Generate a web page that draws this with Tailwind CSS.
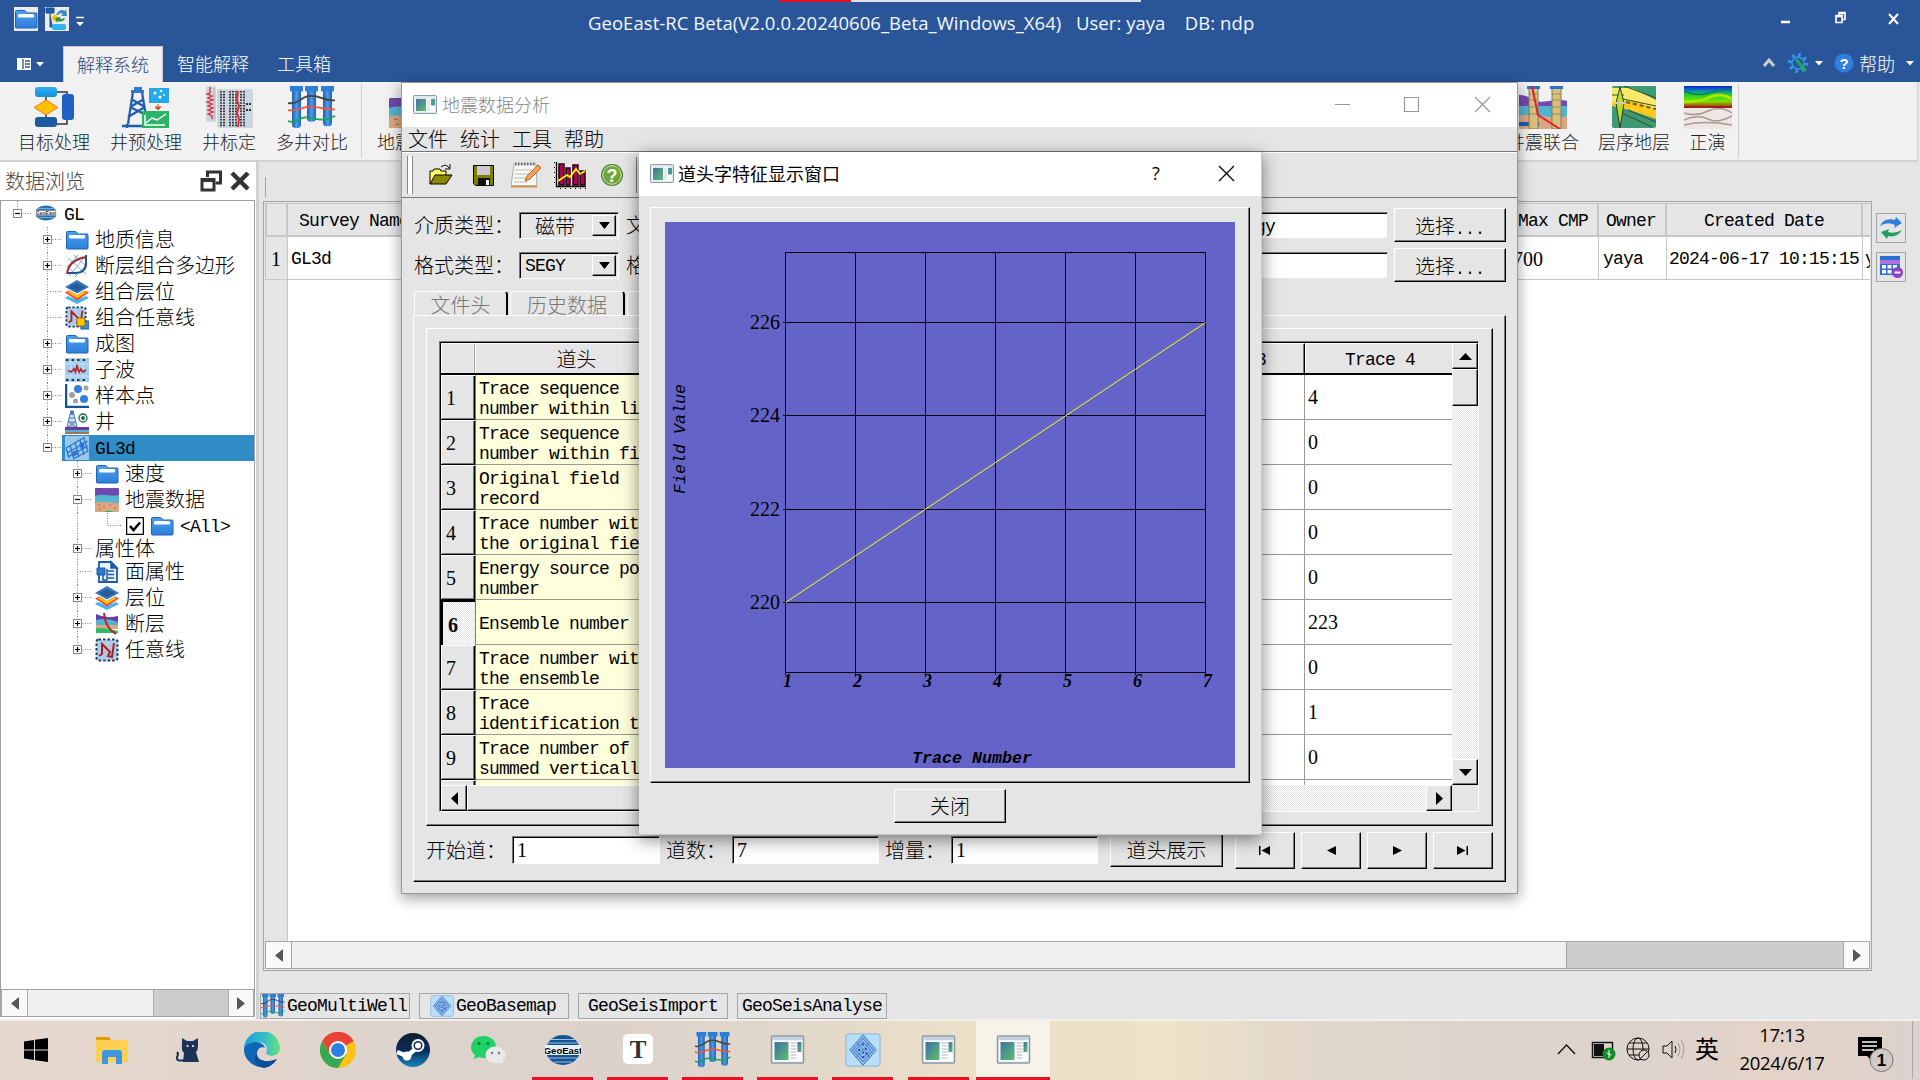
<!DOCTYPE html>
<html lang="zh-CN">
<head>
<meta charset="utf-8">
<title>GeoEast-RC Beta</title>
<script src="https://cdn.jsdelivr.net/npm/@tailwindcss/browser@4"></script>
</head>
<body class="w-[1920px] h-[1080px] overflow-hidden relative bg-[#e5e5e5] text-black font-['Liberation_Mono','Noto_Sans_CJK_SC',monospace] font-light text-[20px] leading-none whitespace-nowrap">

<svg class="absolute w-0 h-0">
  <defs>
    <linearGradient id="gFold" x1="0" y1="0" x2="0" y2="1"><stop offset="0" stop-color="#4aa0ec"/><stop offset="1" stop-color="#2f7fdb"/></linearGradient>
    <linearGradient id="gSky" x1="0" y1="0" x2="0" y2="1"><stop offset="0" stop-color="#2bb0f0"/><stop offset="1" stop-color="#1a8fd8"/></linearGradient>
    <linearGradient id="gPipe" x1="0" y1="0" x2="1" y2="0"><stop offset="0" stop-color="#1f5fae"/><stop offset=".5" stop-color="#4d9be8"/><stop offset="1" stop-color="#1f62b4"/></linearGradient>
    <linearGradient id="gWin" x1="0" y1="0" x2="1" y2="1"><stop offset="0" stop-color="#3f6fa8"/><stop offset="1" stop-color="#5fbf6a"/></linearGradient>
    <linearGradient id="gEdge" x1="0" y1="0" x2="1" y2="0"><stop offset="0" stop-color="#1b9de2"/><stop offset=".6" stop-color="#35c1c4"/><stop offset="1" stop-color="#6be07a"/></linearGradient>
    <linearGradient id="gSteam" x1="0" y1="0" x2="0" y2="1"><stop offset="0" stop-color="#111d2e"/><stop offset=".5" stop-color="#0b2a5b"/><stop offset="1" stop-color="#1387b8"/></linearGradient>
    <linearGradient id="gRain" x1="0" y1="0" x2="0" y2="1"><stop offset="0" stop-color="#1020d0"/><stop offset=".22" stop-color="#1088c0"/><stop offset=".4" stop-color="#20d020"/><stop offset=".7" stop-color="#7ee000"/><stop offset=".88" stop-color="#a06010"/><stop offset="1" stop-color="#a01010"/></linearGradient>
  </defs>
  <symbol id="folder" viewBox="0 0 24 24"><path d="M1.500 20V4.500q0-1 1-1h8l3 2.500h8.500q1 0 1 1V20q0 1-1 1h-19.500q-1 0-1-1z" fill="url(#gFold)" stroke="#1a63b8"/><rect x="4" y="7" width="16" height="3.500" rx="1.200" fill="#fff"/></symbol>
  <symbol id="geoeast" viewBox="0 0 24 16"><ellipse cx="12" cy="8" rx="11" ry="7.500" fill="#2b71ab"/><path d="M3 3.500h18M2 12.500h20" stroke="#9cc5df" stroke-width=".7"/><rect x="0" y="5.700" width="24" height="4.600" fill="#fff"/><text x="12" y="9.800" font-size="5" font-weight="bold" text-anchor="middle" font-family="Liberation Sans" fill="#333">GeoEast</text></symbol>
  <symbol id="fault2" viewBox="0 0 24 24"><path d="M3 4l18 16M9 1l13 12M2 12l10 10M20 3L4 22M22 10L10 23M13 1L2 13" stroke="#6d90b8" stroke-width=".8"/><path d="M2 20C3 10 10 5 21 3" fill="none" stroke="#a5282e" stroke-width="2"/><path d="M21 1v8c0 7-4 10-11 10H2" fill="none" stroke="#1e5594" stroke-width="2"/></symbol>
  <symbol id="layers" viewBox="0 0 24 24"><path d="M0 18l12 6 12-6-3-2-9 4-9-4z" fill="#46b4e8"/><path d="M0 12.500l12 8 12-8-4-2-8 4.500-8-4.500z" fill="#f2453c"/><path d="M2.500 12.300l9.500 6 9.500-6-2-1-7.500 4-7.500-4z" fill="#ffc800"/><path d="M0 7l12-7 12 7-12 6.500z" fill="#3377bd"/><path d="M4 7l8-4 8 4-8 4.500z" fill="#2a5c99"/></symbol>
  <symbol id="anyline" viewBox="0 0 24 24"><rect x="1.500" y="1.500" width="21" height="21" rx="2" fill="#a9d3f5" stroke="#23364f" stroke-width="2" stroke-dasharray="2.500 2"/><path d="M2.500 8h19M2.500 15h19M9 2v20M16 2v20" stroke="#c9b7b0" stroke-width="1"/><path d="M4 18l3-2V6l8 8-2 4 4 1 2-14" fill="none" stroke="#a8202a" stroke-width="2"/></symbol>
  <symbol id="anyline2" viewBox="0 0 24 24"><use href="#anyline" width="22" height="22"/><rect x="16" y="15" width="8" height="8" fill="#3d8ae0" stroke="#1f5fae"/><rect x="12" y="12" width="8" height="8" fill="#ffc400" stroke="#9a6a00"/></symbol>
  <symbol id="wavelet" viewBox="0 0 24 24"><rect width="24" height="24" fill="#9dcdf2"/><path d="M0 6h24M0 18h24M6 0v24M12 0v24M18 0v24" stroke="#cfe6f7"/><path d="M1 2h22M1 22h22" stroke="#333" stroke-width="2" stroke-dasharray="2.500 3"/><path d="M3 12.500l3 1.500 3-3 1.500 3L12 8l2 6 2-3 2 3 3-2" fill="none" stroke="#b32a30" stroke-width="1.800"/></symbol>
  <symbol id="samples" viewBox="0 0 24 24"><path d="M1 0v23h23" fill="none" stroke="#12539e" stroke-width="2.500"/><circle cx="13" cy="5" r="4" fill="#3280dd"/><circle cx="19" cy="15" r="4" fill="#3280dd"/><circle cx="7" cy="11" r="3" fill="#a2a2a2"/><circle cx="21" cy="4" r="2.500" fill="#a2a2a2"/><circle cx="10.500" cy="17" r="2.500" fill="#a2a2a2"/></symbol>
  <symbol id="wellrow" viewBox="0 0 24 24"><path d="M5 4h4l3 13H2z" fill="#cfe0ef" stroke="#4b7cab"/><path d="M5.500 1h3v3h-3zM4 8h6M3.500 12h7M3 17l7-5M11 17L4 12" stroke="#4b7cab" fill="#4b7cab"/><circle cx="18" cy="8" r="4" fill="#fff" stroke="#1b6e48" stroke-width="1.300"/><circle cx="18" cy="8" r="2" fill="#1b6e48"/><path d="M0 17h24v3H0z" fill="#6a3da5"/><path d="M0 20h24v2H0z" fill="#52b4cf"/><path d="M0 22h24v2H0z" fill="#a57254"/></symbol>
  <symbol id="survey3d" viewBox="0 0 24 24"><rect width="24" height="24" rx="1" fill="#9ac8ec"/><path d="M1 12L20 1M2 17L23 5M3 21L23 10M8 23l15-8M5 9l4 14M10 6l4 15M15 4l4 15M19 2l4 14M1 12l3 10" stroke="#2a74cf" stroke-width="1.300"/><path d="M6 17l5-3 2 4-5 3zM14 8l4-2 2 5-4 2z" fill="#2a74cf"/></symbol>
  <symbol id="seis" viewBox="0 0 24 24"><rect width="24" height="9" rx="1" fill="#6f47ad"/><path d="M0 8q5-2 11-1t13 0v9H0z" fill="#54b6cf"/><path d="M0 15q6-2 12-1t12 1v8q0 1-1 1H1q-1 0-1-1z" fill="#dca780"/><path d="M3 17h2M8 19h2M14 17h2M19 20h2M4 21h2" stroke="#a8714c"/><path d="M9 24q4-3 10 0z" fill="#2fb96a"/></symbol>
  <symbol id="doc" viewBox="0 0 24 24"><path d="M4 2h12l6 6v14H4z" fill="#e8f2fb" stroke="#1d5ba5" stroke-width="1.800"/><path d="M16 2v6h6zM13 11h6M13 14.500h6M13 18h6" stroke="#1d5ba5" stroke-width="1.600" fill="#1d5ba5"/><path d="M2 8h8v7H2z" fill="#2c7ac9" stroke="#1d5ba5"/><path d="M8 14v6h4V9" fill="none" stroke="#1d5ba5" stroke-width="1.500"/></symbol>
  <symbol id="faultrow" viewBox="0 0 24 24"><path d="M1 2q10 5 22 2v6H1z" fill="#6a3da5"/><path d="M1 8q10-3 22 2v5H1z" fill="#52b4cf"/><path d="M1 13h22v4H1z" fill="#dca780"/><path d="M1 16q12 0 22 3v2H1z" fill="#2fb96a"/><path d="M9 1q1 15 12 21" fill="none" stroke="#b3242c" stroke-width="2"/></symbol>
  <symbol id="wells" viewBox="0 0 48 48"><g fill="url(#gPipe)"><rect x="4" y="2" width="9" height="45" rx="4"/><rect x="19" y="2" width="9" height="38" rx="4"/><rect x="35" y="2" width="9" height="43" rx="4"/></g><g fill="#2c7fd6"><rect x="2" y="0" width="13" height="6"/><rect x="17" y="0" width="13" height="6"/><rect x="33" y="0" width="13" height="6"/></g><path d="M0 19c12 2 12-8 23-8s12 6 24 5" fill="none" stroke="#444" stroke-width="2"/><path d="M0 27c12 2 12-4 23-4s12 4 24 3" fill="none" stroke="#f2553a" stroke-width="2"/><path d="M0 39c8 4 12-5 18-4s20 6 29-2" fill="none" stroke="#20a060" stroke-width="2"/></symbol>
  <symbol id="win" viewBox="0 0 34 30" ><rect x="1" y="1" width="32" height="27" rx="1" fill="#eef2f6" stroke="#8a99a8" stroke-width="1.500"/><rect x="2" y="2" width="30" height="3" fill="#c5d0da"/><rect x="3" y="6" width="28" height="20" fill="#fff"/><rect x="4" y="7" width="14" height="18" fill="url(#gWin)"/><path d="M20 8h6M20 11h6M20 14h6M20 17h6M20 20h6M20 23h6" stroke="#ccd" stroke-width="1.500"/><rect x="27" y="7" width="4" height="10" fill="url(#gWin)"/></symbol>
  <symbol id="winsm" viewBox="0 0 24 20" preserveAspectRatio="none"><rect x=".5" y=".5" width="23" height="19" rx="1" fill="#dfe6ec" stroke="#8796a5"/><rect x="2" y="3" width="20" height="15" fill="#fff"/><rect x="3" y="4" width="10" height="13" fill="url(#gWin)"/><path d="M18 4h4v7h-4z" fill="#4b9a93"/><path d="M14 4h3v13h-3z" fill="#e4e8f2"/></symbol>
  <symbol id="basemap" viewBox="0 0 38 38" preserveAspectRatio="none"><rect x="1" y="1" width="36" height="36" rx="3" fill="#b9defa" stroke="#7fb0d8"/><path d="M19 2l14 17-14 17L5 19z" fill="#8cbcf0" stroke="#3c6fb8"/><path d="M19 6l11 13-11 13L8 19zM19 10l8 9-8 9-8-9z" fill="none" stroke="#3565b2" stroke-width=".9"/><path d="M12 10l14 17M26 10L12 27" stroke="#3565b2" stroke-width=".7"/><path d="M18 12h2v2h-2zM14 18h2v2h-2zM21 17h2v2h-2zM18 21h2v2h-2zM22 22h2v2h-2zM18 26h2v2h-2z" fill="#1f3f90"/></symbol>
</svg>

<div class="w-full h-full flex flex-col">
  <!-- title bar and ribbon tabs -->
  <header class="h-[82px] shrink-0 bg-[#2a5699] text-white flex flex-col font-['Open_Sans','Noto_Sans_CJK_SC',sans-serif]">
    <div class="h-[46px] flex items-start relative">
      <div class="absolute left-[779px] top-0 flex"><i class="w-[72px] h-[2px] bg-[#e81123]"></i><i class="w-[290px] h-[2px] bg-[#dfe4ec]"></i></div>
      <div class="flex gap-[7px] pl-[14px] pt-[7px] w-[588px]">
        <svg class="w-6 h-6 bg-[#ececec]"><use href="#folder"/></svg>
        <svg class="w-6 h-6 bg-[#ececec]" viewBox="0 0 24 24"><path d="M1 1h8v5H1zM5 6v14h3" fill="#1f5fae" stroke="#1c4c86"/><path d="M6 11l4-4 4 4-4 4z" fill="#ffc400"/><path d="M11 8q4-7 9-4l1-2 1 7h-6l2-2q-3-2-5 1z" fill="#3f86d0"/><path d="M20 11q-2 5-7 3l-1 2-2-5 6-1-1 2q3 1 3-1z" fill="#2c8c58"/><rect x="7" y="17" width="14" height="6" rx="2" fill="#2fb4ea"/></svg>
        <svg class="w-[10px] h-[12px] mt-[9px] -ml-px" viewBox="0 0 10 12"><path d="M1 1.500h8" stroke="#fff"  stroke-width="1.500"/><path d="M1 6h8L5 10z" fill="#fff"/></svg>
      </div>
      <div class="pt-[11px] text-[18.500px] leading-6 tracking-[0.050px] whitespace-pre font-normal text-[#f4f6fa]">GeoEast-RC Beta(V2.0.0.20240606_Beta_Windows_X64)   User: yaya    DB: ndp</div>
      <svg class="ml-auto w-[140px] h-[38px]" viewBox="0 0 140 38" fill="none" stroke="#fff"><path d="M1 22h9" stroke-width="2.500"/><path d="M56 15.500h6v7h-6zM56 16.500h6M59 15v-2.500h6v7h-3M59 13.500h6" stroke-width="1.700"/><path d="M109 14l9 10M118 14l-9 10" stroke-width="2"/></svg>
    </div>
    <div class="h-9 flex text-[18px] leading-9">
      <div class="w-[63px] pl-[17px] pt-3 flex gap-[5px]">
        <svg class="w-[14px] h-[12px]"><path d="M0 0h14v12H0z" fill="#fff"/><path d="M6 1v10M8 3h5M8 6h5M8 9h5" stroke="#2a5699" stroke-width="1.300"/></svg>
        <svg class="w-2 h-[12px]"><path d="M0 4h8L4 8.500z" fill="#fff"/></svg>
      </div>
      <div class="w-[100px] bg-[#f1f1f1] border-t border-x border-[#ccc] text-[#2b4a80] text-center">解释系统</div>
      <div class="w-[100px] text-center">智能解释</div>
      <div class="w-[82px] text-center">工具箱</div>
      <div class="ml-auto flex pr-[5px]">
        <svg class="w-[97px] h-9 mr-[2px]" viewBox="0 0 97 36"><path d="M3 20l5-6 5 6" fill="none" stroke="#c8ccd2" stroke-width="3"/><circle cx="37" cy="17" r="8" fill="none" stroke="#3696e8" stroke-width="4" stroke-dasharray="2.500 3.780"/><circle cx="37" cy="17" r="6" fill="#2a5699" stroke="#3696e8" stroke-width="1.500"/><path d="M35 13l3 4 7 8" stroke="#20a85e" stroke-width="3"/><path d="M54 15h8l-4 4.500z" fill="#fff"/><circle cx="83" cy="17" r="9.500" fill="#2f80de"/><text x="83" y="22.500" text-anchor="middle" font-size="15" font-weight="bold" fill="#fff" font-family="Liberation Sans">?</text></svg>
        <span class="w-[46px] -ml-px mr-px">帮助</span>
        <svg class="w-[9px] h-9"><path d="M0 15h8l-4 4.500z" fill="#fff"/></svg>
      </div>
    </div>
  </header>

  <!-- ribbon -->
  <section class="h-[80px] shrink-0 bg-[#f1f1f1] border-b-2 border-[#d2d2d2] mr-[2px] border-r flex text-[18px] text-[#222] font-['Noto_Sans_CJK_SC',sans-serif] leading-6">
    <div class="w-[108px] flex flex-col items-center pt-[5px]">
      <svg class="w-10 h-[41px] mb-[1px]" viewBox="0 0 40 41"><path d="M12 10v20M20 5h13v32H20" fill="none" stroke="#333" stroke-width="1.500"/><rect x="1" y="0" width="22" height="10" rx="3" fill="url(#gSky)"/><rect x="28" y="7" width="12" height="26" rx="3" fill="#2060c4"/><path d="M12 13l12 7.500-12 7.500L0 20.500z" fill="#ffc000" stroke="#e87e1c"/><rect x="1" y="30" width="22" height="10" rx="3" fill="#1d5ba0"/></svg>目标处理</div>
    <div class="w-[76px] flex flex-col items-center pt-[5px]">
      <svg class="w-12 h-[41px] mb-[1px]" viewBox="0 0 48 41"><path d="M11 5L6 37M20 5l5 31M9 12l14 8M22 12L8 20M8 20l16 8M23 20L6 30M0 39h28M5 37v4" fill="none" stroke="#235fae" stroke-width="2.300"/><path d="M12 0h8v3H12zM9 3h13v3H9z" fill="#3477cb"/><rect x="27" y="1" width="20" height="15" fill="#27a8ea"/><g fill="#fff"><circle cx="33" cy="6" r="1.500"/><circle cx="39" cy="4" r="1.300"/><circle cx="38" cy="10" r="1.600"/><circle cx="42" cy="8" r="1"/></g><path d="M36 17v4M33 20h6l-3 3z" fill="#e84a2c" stroke="#e84a2c"/><rect x="20" y="24" width="27" height="17" fill="#2bb468"/><path d="M23 28v10h20M24 36l6-5 5 2 9-6" fill="none" stroke="#fff" stroke-width="1.500"/></svg>井预处理</div>
    <div class="w-[90px] flex flex-col items-center pt-[4px]">
      <svg class="w-12 h-[42px] mb-[1px]" viewBox="0 0 48 42"><rect x="1" y="0" width="10" height="36" rx="2" fill="#cdd5dd"/><rect x="12" y="3" width="36" height="39" rx="2" fill="#cbd6e1"/><path d="M5 1v6l-3 1 5 2-4 2 5 2-6 2 5 2-4 2 5 2-5 2 5 2-5 2 4 2v3" fill="none" stroke="#e02836" stroke-width="1.300"/><path d="M9 2v32" stroke="#8d98a6" stroke-dasharray="1 1"/><g fill="none" stroke="#3a3a3a" stroke-width="2" stroke-dasharray="1.600 1.200"><path d="M16 5v36M19 5v36M25 5v36M28 5v36M31 5v36M36 5v36M39 5v36"/></g><path d="M33 5l-1 9 2 6-2 7 2 6-1 8" fill="none" stroke="#e02836" stroke-width="2"/><path d="M41 18h6M41 24h6" stroke="#333" stroke-width="2" stroke-dasharray="2 1"/></svg>井标定</div>
    <div class="w-[76px] flex flex-col items-center pt-[4px]"><svg class="w-12 h-[43px]" viewBox="0 0 48 48" preserveAspectRatio="none"><use href="#wells"/></svg>多井对比</div>
    <div class="w-[12px] border-r border-[#cfcfcf] mt-[2px] h-[74px]"></div>
    <div class="pl-[15px] pt-[4px] flex flex-col"><svg class="w-10 h-[30px] ml-[12px] mt-[12px] mb-[1px]" preserveAspectRatio="none" viewBox="0 0 24 24"><use href="#seis"/></svg>地震</div>
    <div class="ml-auto w-[90px] flex flex-col items-center pt-[4px]">
      <svg class="w-12 h-[43px]" viewBox="0 0 48 43"><path d="M0 9q8 0 12 4t18 2 18 0v12H0z" fill="#7448b4"/><path d="M0 20h48v14H0z" fill="#52b4cf"/><path d="M0 30q10-3 24 0t24 0v13H0z" fill="#dca780"/><path d="M0 38h20" stroke="#1c5bb8" stroke-width="4"/><g fill="#d8c078" stroke="#8a7c50"><rect x="10" y="2" width="9" height="41"/><rect x="33" y="2" width="9" height="41"/></g><path d="M10 8h9M10 14h9M10 21h9M10 28h9M33 8h9M33 14h9M33 21h9M33 28h9" stroke="#777" stroke-dasharray="2 1"/><path d="M8 0h13v3H8zM31 0h13v3H31z" fill="#2a74cf"/><path d="M13 0l6 29 22 14" fill="none" stroke="#e0202c" stroke-width="2"/></svg>井震联合</div>
    <div class="w-[92px] flex flex-col items-center pt-[4px]">
      <svg class="w-11 h-[43px]" viewBox="0 0 44 43"><rect width="44" height="42" rx="2" fill="#3d9a72"/><path d="M0 3l20 6 24 10v14L18 24 0 20z" fill="#ffc81e"/><path d="M0 2h20l24 12v9L20 14 0 17z" fill="#f6e86a"/><path d="M22 0h22v14z" fill="#3d9a72"/><path d="M6 12l38 8M12 0l32 12M16 24l28 12M10 27l30 14M0 9h12" stroke="#374a2c" fill="none"/><path d="M14 16l30 7" stroke="#6a5c10" stroke-width="2" stroke-dasharray="4 3"/><path d="M8 1l4 16-4 25L4 17z" fill="#b8e020" stroke="#333"/><path d="M3 17h10" stroke="#ccc" stroke-width="2"/></svg>层序地层</div>
    <div class="w-[55px] flex flex-col items-center pt-[4px]">
      <svg class="w-12 h-[43px]" viewBox="0 0 48 43"><rect width="48" height="22" fill="url(#gRain)"/><path d="M0 5q12 6 24 2t24-3" fill="none" stroke="#0a7a70" stroke-width="1.500"/><path d="M0 16q16 0 26-5t22 2" fill="none" stroke="#a8e800" stroke-width="3"/><rect y="21" width="48" height="22" fill="#eee6e2"/><path d="M0 27q12 4 24-2t24 2M0 34q14-6 24-1t24-3M0 39q20-5 48 0" fill="none" stroke="#a89894" stroke-width="1.500"/><path d="M0 21h48" stroke="#9a2020" stroke-width="2"/></svg>正演</div>
    <div class="w-[4px] border-r border-[#cfcfcf] mt-[2px] h-[74px] mr-[178px]"></div>
  </section>

  <!-- body -->
  <div class="flex h-[857px] shrink-0">
    <aside class="w-[256px] bg-white flex flex-col font-['Noto_Sans_CJK_SC',sans-serif]">
      <div class="h-[38px] flex items-center pl-[5px] pb-px text-[#444]">数据浏览
        <svg class="ml-auto w-[22px] h-[22px]" viewBox="0 0 22 22"><path d="M7.500 7V2h13v11h-5" fill="none" stroke="#333" stroke-width="3"/><path d="M2 9.500h12v10.500H2zM2 10.500h12" fill="#fff" stroke="#333" stroke-width="3"/></svg>
        <svg class="ml-[8px] mr-[6px] w-[20px] h-[20px]" viewBox="0 0 20 20"><path d="M2 2l16 16M18 2L2 18" stroke="#333" stroke-width="4.500"/></svg>
      </div>
      <div class="w-[255px] h-[817px] border border-[#a0a0a0] flex flex-col">
        <div id="tree" class="flex-1 overflow-hidden"></div>
        <div class="h-[27px] flex border-t border-[#a0a0a0] bg-[#cdcdcd]">
          <div class="w-[27px] bg-[#f8f8f8] border-x border-[#aaa] flex items-center justify-center"><svg class="w-2 h-[13px]"><path d="M8 0v13L0 6.500z" fill="#555"/></svg></div>
          <div class="w-[126px] bg-[#f0f0f0] border-r border-[#aaa]"></div>
          <div class="ml-auto w-[26px] bg-[#f8f8f8] border-x border-[#aaa] flex items-center justify-center"><svg class="w-2 h-[13px]"><path d="M0 0v13L8 6.500z" fill="#555"/></svg></div>
        </div>
      </div>
    </aside>
    <div class="w-[3px] bg-[#d2d2d2] h-[857px]"></div>
    <main class="flex-1 flex flex-col pl-[1px]">
      <div class="h-[39px] pt-[15px] pl-[5px]"><div class="h-5 border-l border-[#a0a0a0] w-2"></div></div>
      <div class="flex">
        <div class="ml-[3px] w-[1609px] h-[770px] border border-[#a6a6a6] p-px flex flex-col text-[18px] tracking-[-0.8px]">
          <div class="h-[34px] flex border-t border-[#c6c6c6] leading-[34px] border-b-2 border-b-[#c6c6c6]">
            <div class="w-[23px] border-x-2 border-[#c6c6c6]"></div>
            <div class="flex-1 pl-[11px]">Survey Name</div>
            <div class="w-[89px] border-r-2 border-[#c6c6c6] pl-[8px]">Max CMP</div>
            <div class="w-[68px] border-r-2 border-[#c6c6c6] pl-[7px]">Owner</div>
            <div class="w-[196px] border-r-2 border-[#c6c6c6] text-center">Created Date</div>
            <div class="w-[7px]"></div>
          </div>
          <div class="h-[43px] flex border-b border-[#c6c6c6] leading-[44px] bg-white">
            <div class="w-[23px] border-x border-[#c6c6c6] bg-[#e5e5e5] pl-[5px] font-['Liberation_Serif',serif] text-[20px] tracking-normal">1</div>
            <div class="flex-1 pl-[3px]">GL3d</div>
            <div class="w-[89px] border-r border-[#c6c6c6] pl-[3px] font-['Liberation_Serif',serif] text-[20px] tracking-normal">700</div>
            <div class="w-[68px] border-r border-[#c6c6c6] pl-[4px]">yaya</div>
            <div class="w-[196px] border-r border-[#c6c6c6] pl-[2px]">2024-06-17 10:15:15</div>
            <div class="w-[7px] overflow-hidden pl-[2px]">y</div>
          </div>
          <div class="flex-1 flex bg-white"><div class="w-[23px] bg-[#e5e5e5] border-r border-[#c6c6c6]"></div></div>
          <div class="h-[28px] flex border border-[#a6a6a6] bg-[#cdcdcd]">
            <div class="w-[26px] bg-[#f8f8f8] border-r border-[#a6a6a6] flex items-center justify-center"><svg class="w-2 h-[13px]"><path d="M8 0v13L0 6.500z" fill="#555"/></svg></div>
            <div class="w-[1275px] bg-[#f0f0f0] border-r border-[#a6a6a6]"></div>
            <div class="ml-auto w-[26px] bg-[#f8f8f8] border-l border-[#a6a6a6] flex items-center justify-center"><svg class="w-2 h-[13px]"><path d="M0 0v13L8 6.500z" fill="#555"/></svg></div>
          </div>
        </div>
        <div class="pl-[4px] pt-[12px] flex flex-col gap-[9px]">
          <div class="w-[30px] h-[30px] border border-[#a6a6a6] p-[2px]"><svg class="w-6 h-6" viewBox="0 0 24 24"><path d="M1 10Q5 1 16 4l1-3 6 6-8 5 1-3Q8 5 1 10z" fill="#2c80dc"/><path d="M23 14q-5 8-14 6l-1 3-6-7 8-3-1 3q7 2 14-2z" fill="#22a060"/></svg></div>
          <div class="w-[30px] h-[30px] border border-[#a6a6a6] p-[2px]"><svg class="w-6 h-6" viewBox="0 0 24 24"><path d="M1 1h20v19H1z" fill="#2b6fd0"/><path d="M1 5h20v4H1z" fill="#b070e0"/><path d="M3 10h4v3.500H3zM8.500 10h4v3.500h-4zM14 10h4v3.500h-4zM3 15h4v3.500H3zM8.500 15h4v3.500h-4z" fill="#fff"/><circle cx="18.500" cy="17.500" r="5.500" fill="#9340c4"/><path d="M15.500 17.500h6" stroke="#fff" stroke-width="2"/></svg></div>
        </div>
      </div>
      <div class="flex mt-[22px] gap-[9px] text-[18px] tracking-[-0.8px] leading-[26px]">
        <div class="w-[150px] h-[26px] border border-[#a6a6a6] flex items-center"><svg class="w-6 h-6 mr-[2px]"><use href="#wells"/></svg>GeoMultiWell</div>
        <div class="w-[150px] h-[26px] border border-[#a6a6a6] flex items-center pl-[10px]"><svg class="w-6 h-[22px] mr-[2px]"><use href="#basemap"/></svg>GeoBasemap</div>
        <div class="w-[150px] h-[26px] border border-[#a6a6a6] flex items-center justify-center">GeoSeisImport</div>
        <div class="w-[150px] h-[26px] border border-[#a6a6a6] flex items-center justify-center">GeoSeisAnalyse</div>
      </div>
    </main>
  </div>

  <!-- taskbar -->
  <footer class="h-[61px] shrink-0 border-t-2 border-[#f2efec] flex font-['Open_Sans','Noto_Sans_CJK_SC',sans-serif] font-normal bg-[linear-gradient(90deg,#e6d8ce_0%,#e2d5cb_12%,#dcd3cd_22%,#ddd2cb_32%,#e2d8ca_42%,#ebe0c8_50%,#ece3c9_61%,#e2d7ca_68%,#dcd3cd_78%,#dfd3cc_88%,#e4d3c7_92%,#dcd2cc_100%)]">
    <div id="tasks" class="flex"></div>
    <div class="ml-auto flex">
      <svg class="w-[139px] h-[58px]" viewBox="0 0 139 58" fill="none" stroke="#111"><path d="M2 33l8.500-9 8.500 9" stroke-width="1.300"/><path d="M36.500 21.500h20v15h-20z" stroke-width="1.500"/><path d="M38 23h10v12H38z" fill="#111" stroke="none"/><circle cx="53" cy="33" r="6.500" fill="#128a28" stroke="none"/><path d="M53 29v8M50.500 32l5 2" stroke="#fff"/><circle cx="82" cy="28" r="11"/><ellipse cx="82" cy="28" rx="5" ry="11"/><path d="M71 28h22M73 22h18M73 34h11"/><circle cx="88" cy="34" r="5" fill="#ddd3cd"/><path d="M85 37l6-6"/><path d="M107 25h4l5-5v17l-5-5h-4z"/><path d="M119 25q2 3 0 7" /><path d="M122 22q4 6 0 13M125 19q6 9 0 19" stroke="#999"/></svg>
      <div class="text-[24px] leading-[56px] pr-[15px]">英</div>
      <div class="text-[18.500px] leading-7 text-center w-[96px] pt-0 tracking-[-0.300px]">17:13<br>2024/6/17</div>
      <svg class="w-[90px] h-[58px]" viewBox="0 0 90 58"><path d="M28 16h24v19H43v6l-6-6h-9z" fill="#000"/><path d="M32 21h15M32 25h15M32 29h12" stroke="#fff" stroke-width="1.300"/><circle cx="51.500" cy="39" r="11.500" fill="#cfcac6" stroke="#777"/><text x="51.500" y="45" font-size="17" font-weight="bold" text-anchor="middle" font-family="Liberation Sans">1</text><path d="M82.500 0v58" stroke="#aaa"/></svg>
    </div>
  </footer>
</div>

<!-- analysis window -->
<section class="absolute left-[401px] top-[82px] w-[1117px] h-[812px] bg-[#e5e5e5] border border-[#999] shadow-[0_4px_14px_rgba(0,0,0,0.4)] flex flex-col font-['Noto_Sans_CJK_SC',sans-serif]">
  <div class="h-[44px] shrink-0 bg-white flex items-center pl-[11px] text-[18px] text-[#888]">
    <svg class="w-6 h-[19px] mr-[5px] mb-[2px]"><use href="#winsm"/></svg><span class="pb-[2px]">地震数据分析</span>
    <svg class="ml-auto w-[182px] h-[44px]" viewBox="0 0 182 44" fill="none" stroke="#999"><path d="M0 21.500h15M69.500 14.500h14v14h-14zM140 14l15 15M155 14l-15 15" stroke-width="1.200"/></svg>
  </div>
  <div class="h-[25px] shrink-0 flex gap-3 pl-[6px] leading-[23px] border-b border-[#777]"><span>文件</span><span>统计</span><span>工具</span><span>帮助</span></div>
  <div class="h-[46px] shrink-0 flex items-center pl-[5px] border-t border-t-white border-b border-b-[#777]">
    <div class="w-[6px] h-[38px] border-x border-[#888] bg-white mr-[15px]"></div>
    <svg class="w-[25px] h-[24px] mr-[20px]" viewBox="0 0 25 24"><path d="M2 21V8h3l1-2h6l1 2h5v4" fill="#ffff66" stroke="#000"/><path d="M2 21l5-9h17l-6 9z" fill="#8a8a00" stroke="#000"/><path d="M13 4q5-4 8 1M22 1v5h-5" fill="none" stroke="#000"/></svg>
    <svg class="w-[21px] h-[21px] mr-[17px]" viewBox="0 0 21 21"><path d="M.5.500h20v20h-18l-2-2z" fill="#808000" stroke="#000"/><path d="M4 1h13v9H4z" fill="#d0c8d4"/><path d="M5 13h12v8H5z" fill="#111"/><path d="M13 15h3v5h-3z" fill="#fff"/></svg>
    <svg class="w-[31px] h-[26px] mr-[12px]" viewBox="0 0 31 26"><path d="M3 2h22l1 22H0z" fill="#f8f8f6" stroke="#aaa"/><path d="M0 24.500h26" stroke="#d08a44" stroke-width="1.800"/><path d="M4 2h20" stroke="#777" stroke-width="3" stroke-dasharray="1.500 1.500"/><path d="M4 8h17M4 12h15M3 16h12M3 20h14" stroke="#bbb"/><path d="M14 19l2-5L27 3l3 3-11 11z" fill="#f6a05a" stroke="#b8621c"/></svg>
    <svg class="w-[32px] h-[27px] mr-[14px]" viewBox="0 0 32 27"><path d="M2.500 0v24.500H32" fill="none" stroke="#000" stroke-width="1.300"/><path d="M.5 0v23M6 26.500h26" stroke="#000" stroke-dasharray="1 4"/><g fill="#b00050" stroke="#200010" stroke-width="1.500"><rect x="5" y="2" width="5" height="21"/><rect x="12" y="6" width="4" height="17"/><rect x="19" y="3" width="5" height="20"/><rect x="26" y="9" width="5" height="14"/></g><path d="M4 19l9-6 3 2 6-8 4 5 5-3" fill="none" stroke="#ff0" stroke-width="1.700"/></svg>
    <svg class="w-[24px] h-[24px]" viewBox="0 0 24 24"><circle cx="12" cy="12" r="11" fill="#4d7f24"/><circle cx="12" cy="12" r="9.300" fill="#6ea53b" stroke="#dfeecb"/><text x="12" y="18.500" font-size="18" font-weight="bold" text-anchor="middle" fill="#fff" font-family="Liberation Sans">?</text></svg>
    <div class="ml-[12px] h-9 border-l border-[#777]"></div>
  </div>
  <div class="flex flex-col gap-[6px] pl-[12px] pr-[11px] pt-[10px]">
    <div class="h-[34px] flex items-center">
      <span class="w-[105px]">介质类型：</span>
      <div class="w-[100px] h-[27px] border border-t-[#777] border-l-[#777] border-r-white border-b-white shadow-[inset_1px_1px_0_#000] pl-[15px] pt-[2px] pr-[2px] flex leading-[22px]">磁带<div class="ml-auto w-[24px] h-[21px] border border-t-white border-l-white border-r-black border-b-black shadow-[inset_-1px_-1px_0_#777] flex items-center justify-center"><svg class="w-[11px] h-[7px]"><path d="M0 0h11L5.500 7z"/></svg></div></div>
      <span class="pl-[7px]">文件</span>
      <div class="ml-auto w-[260px] h-[27px] bg-white border border-t-[#777] border-l-[#777] border-r-[#e5e5e5] border-b-[#e5e5e5] shadow-[inset_1px_1px_0_#000] flex items-center justify-end pr-[112px] pt-[3px] font-['Liberation_Mono'] text-[18px] tracking-[-0.8px]">gl.segy</div>
      <div class="ml-[6px] w-[112px] h-[34px] border border-t-white border-l-white border-r-black border-b-black shadow-[inset_-1px_-1px_0_#777] pl-[20px] leading-[33px]">选择<span class="font-['Liberation_Mono'] text-[16.670px]">...</span></div>
    </div>
    <div class="h-[34px] flex items-center">
      <span class="w-[105px]">格式类型：</span>
      <div class="w-[100px] h-[27px] border border-t-[#777] border-l-[#777] border-r-white border-b-white shadow-[inset_1px_1px_0_#000] pl-[5px] pt-[2px] pr-[2px] flex leading-[22px] font-['Liberation_Mono'] text-[18px] tracking-[-0.8px]">SEGY<div class="ml-auto w-[24px] h-[21px] border border-t-white border-l-white border-r-black border-b-black shadow-[inset_-1px_-1px_0_#777] flex items-center justify-center"><svg class="w-[11px] h-[7px]"><path d="M0 0h11L5.500 7z"/></svg></div></div>
      <span class="pl-[7px]">格式</span>
      <div class="ml-auto w-[260px] h-[27px] bg-white border border-t-[#777] border-l-[#777] border-r-[#e5e5e5] border-b-[#e5e5e5] shadow-[inset_1px_1px_0_#000]"></div>
      <div class="ml-[6px] w-[112px] h-[34px] border border-t-white border-l-white border-r-black border-b-black shadow-[inset_-1px_-1px_0_#777] pl-[20px] leading-[33px]">选择<span class="font-['Liberation_Mono'] text-[16.670px]">...</span></div>
    </div>
  </div>
  <div class="h-[24px] shrink-0 mt-[9px] pl-[12px] flex gap-[2px] text-[#777] leading-[25px]">
    <div class="w-[94px] text-center rounded-t border-t border-l border-white border-r-2 border-r-black">文件头</div>
    <div class="w-[115px] text-center rounded-t border-t border-l border-white border-r-2 border-r-black">历史数据</div>
    <div class="w-[94px] text-center rounded-t border-t border-l border-white border-r-2 border-r-black">道头</div>
  </div>
  <div class="ml-[11px] w-[1093px] h-[567px] shrink-0 border border-t-white border-l-white border-r-black border-b-black shadow-[inset_-1px_-1px_0_#777] pl-[12px] pt-[12px] pr-[12px]">
    <div class="w-[1067px] h-[498px] border border-t-white border-l-white border-r-black border-b-black shadow-[inset_-1px_-1px_0_#777] pl-[12px] pt-[12px]">
      <!-- trace header table -->
      <div class="w-[1040px] h-[471px] border border-t-[#777] border-l-[#777] border-r-white border-b-white shadow-[inset_1px_1px_0_#000] pl-px pt-px flex flex-col">
        <div class="flex h-[442px]">
          <div id="grid" class="w-[1011px] h-[442px] overflow-hidden"></div>
          <div class="flex-1 flex flex-col bg-[repeating-conic-gradient(#fff_0_25%,#e5e5e5_0_50%)] bg-[length:2px_2px]">
            <div class="h-[26px] bg-[#e5e5e5] border border-t-white border-l-white border-r-black border-b-black shadow-[inset_-1px_-1px_0_#777] flex items-center justify-center"><svg class="w-[13px] h-[7px]"><path d="M0 7h13L6.500 0z"/></svg></div>
            <div class="h-[37px] bg-[#e5e5e5] border border-t-white border-l-white border-r-black border-b-black shadow-[inset_-1px_-1px_0_#777]"></div>
            <div class="mt-auto h-[26px] bg-[#e5e5e5] border border-t-white border-l-white border-r-black border-b-black shadow-[inset_-1px_-1px_0_#777] flex items-center justify-center"><svg class="w-[13px] h-[7px]"><path d="M0 0h13L6.500 7z"/></svg></div>
          </div>
        </div>
        <div class="flex h-[26px]">
          <div class="w-[1011px] flex bg-[repeating-conic-gradient(#fff_0_25%,#e5e5e5_0_50%)] bg-[length:2px_2px]">
            <div class="w-[26px] bg-[#e5e5e5] border border-t-white border-l-white border-r-black border-b-black shadow-[inset_-1px_-1px_0_#777] flex items-center justify-center"><svg class="w-[7px] h-[13px]"><path d="M7 0v13L0 6.500z"/></svg></div>
            <div class="w-[500px] bg-[#e5e5e5] border border-t-white border-l-white border-r-black border-b-black shadow-[inset_-1px_-1px_0_#777]"></div>
            <div class="ml-auto w-[26px] bg-[#e5e5e5] border border-t-white border-l-white border-r-black border-b-black shadow-[inset_-1px_-1px_0_#777] flex items-center justify-center"><svg class="w-[7px] h-[13px]"><path d="M0 0v13L7 6.500z"/></svg></div>
          </div>
        </div>
      </div>
    </div>
    <div class="flex items-center h-[36px] mt-[6px]">
      <span class="w-[86px]">开始道：</span>
      <div class="w-[148px] h-[28px] bg-white border border-t-[#777] border-l-[#777] border-r-white border-b-white shadow-[inset_1px_1px_0_#000] pl-[4px] leading-[26px] font-['Liberation_Serif']">1</div>
      <span class="w-[72px] pl-[6px]">道数：</span>
      <div class="w-[147px] h-[28px] bg-white border border-t-[#777] border-l-[#777] border-r-white border-b-white shadow-[inset_1px_1px_0_#000] pl-[4px] leading-[26px] font-['Liberation_Serif']">7</div>
      <span class="w-[72px] pl-[6px]">增量：</span>
      <div class="w-[147px] h-[28px] bg-white border border-t-[#777] border-l-[#777] border-r-white border-b-white shadow-[inset_1px_1px_0_#000] pl-[4px] leading-[26px] font-['Liberation_Serif']">1</div>
      <div class="ml-[12px] w-[113px] h-[34px] border border-t-white border-l-white border-r-black border-b-black shadow-[inset_-1px_-1px_0_#777] text-center leading-[32px]">道头展示</div>
      <div class="ml-auto flex gap-[6px]">
        <div class="w-[60px] h-[37px] border border-t-white border-l-white border-r-black border-b-black shadow-[inset_-1px_-1px_0_#777] flex items-center justify-center"><svg class="w-3 h-[9px]"><path d="M0 0h1.500v9H0zM11 0v9L2.500 4.500z"/></svg></div>
        <div class="w-[60px] h-[37px] border border-t-white border-l-white border-r-black border-b-black shadow-[inset_-1px_-1px_0_#777] flex items-center justify-center"><svg class="w-[9px] h-[9px]"><path d="M9 0v9L0 4.500z"/></svg></div>
        <div class="w-[60px] h-[37px] border border-t-white border-l-white border-r-black border-b-black shadow-[inset_-1px_-1px_0_#777] flex items-center justify-center"><svg class="w-[9px] h-[9px]"><path d="M0 0v9l9-4.500z"/></svg></div>
        <div class="w-[60px] h-[37px] border border-t-white border-l-white border-r-black border-b-black shadow-[inset_-1px_-1px_0_#777] flex items-center justify-center"><svg class="w-3 h-[9px]"><path d="M0 0v9l8.500-4.500zM9.500 0H11v9H9.500z"/></svg></div>
      </div>
    </div>
  </div>
</section>

<!-- chart dialog -->
<section class="absolute left-[639px] top-[152px] w-[623px] h-[683px] bg-[#e5e5e5] border-b border-r border-[#c9c9c9] shadow-[0_4px_16px_rgba(0,0,0,0.5)] flex flex-col font-['Noto_Sans_CJK_SC',sans-serif]">
  <div class="h-[44px] shrink-0 bg-white flex items-center pl-[11px] text-[18px] font-normal">
    <svg class="w-6 h-[19px] mr-[4px] mb-[2px]"><use href="#winsm"/></svg><span class="pb-[2px]">道头字特征显示窗口</span>
    <svg class="ml-auto w-[110px] h-[44px]" viewBox="0 0 110 44"><text x="5" y="28" text-anchor="middle" font-size="18" font-family="Open Sans">?</text><path d="M68 14l15 15M83 14l-15 15" stroke="#000" stroke-width="1.300"/></svg>
  </div>
  <div class="ml-[11px] mt-[11px] w-[600px] h-[576px] shrink-0 border border-t-white border-l-white border-r-black border-b-black shadow-[inset_-1px_-1px_0_#777] pt-[14px] pl-[14px]">
    <svg id="plot" class="w-[570px] h-[546px] bg-[#6464c8]" viewBox="665 222 570 546"></svg>
  </div>
  <div class="mt-[6px] ml-[255px] w-[112px] h-[34px] border border-t-white border-l-white border-r-black border-b-black shadow-[inset_-1px_-1px_0_#777] text-center leading-[32px]">关闭</div>
</section>

<script>
// survey tree: [level, expander, icon, label, row height]
const nodes = [
  [0,'-','geoeast','GL'],[1,'+','folder','地质信息'],[1,'+','fault2','断层组合多边形'],[1,'','layers','组合层位'],
  [1,'','anyline2','组合任意线'],[1,'+','folder','成图'],[1,'+','wavelet','子波'],[1,'+','samples','样本点'],
  [1,'+','wellrow','井'],[1,'-','survey3d','GL3d'],[2,'+','folder','速度'],[2,'-','seis','地震数据'],
  [3,'','folder','<All>'],[2,'+','','属性体',20],[2,'','doc','面属性'],[2,'+','layers','层位'],[2,'+','faultrow','断层'],[2,'+','anyline','任意线']
];
document.getElementById('tree').innerHTML = nodes.map(([lv, ex, ic, label, h = 26], i) => {
  const x = 16.5 + 30 * lv, m = h / 2 - .5, last = label === 'GL3d' || label === '任意线' || lv === 3 || lv === 0;
  const w = lv === 3 ? 125 : (lv === 0 ? 33 : ic ? 31 + 30 * lv : 94);
  let s = `<path d="M${x} 0V${last ? m : h}M${x} ${m}h15" stroke="#888" stroke-dasharray="1 1.500" fill="none"/>`;
  if (lv === 3) s += `<path d="M76.500 0V${h}" stroke="#888" stroke-dasharray="1 1.500"/>`;
  if (ex) s += `<rect x="${x - 4}" y="${m - 4}" width="8" height="8" fill="#fff" stroke="#888"/><path d="M${x - 2.5} ${m}h5${ex === '+' ? `M${x} ${m - 2.5}v5` : ''}" stroke="#000" stroke-width="1.200"/>`;
  const chk = lv === 3 ? '<svg class="w-[18px] h-[18px] mr-[6px]" viewBox="0 0 18 18"><path d="M.5.500h17v17H.5z" fill="#fff" stroke="#000" stroke-width="1.500"/><path d="M4 9l3.500 4L14 5.500" fill="none" stroke="#000" stroke-width="2.500"/></svg>' : '';
  const icon = ic ? `<svg class="w-6 ${lv ? 'h-6' : 'h-[16px] mb-[3px]'} mr-[6px]"><use href="#${ic}"/></svg>` : '';
  const latin = /^[\x00-\x7f]+$/.test(label);
  const t = label.replace('<', '&lt;').replace('>', '&gt;');
  return `<div class="flex" style="height:${h}px"><svg class="shrink-0" style="width:${w}px;height:${h}px">${s}</svg>` +
    `<div class="flex items-center flex-1 ${label === 'GL3d' ? 'bg-[#308cc6]' : ''} ${lv && ic && lv < 3 ? 'pl-[3px]' : ''}">${chk}${icon}<span class="${latin ? "font-['Liberation_Mono'] text-[18px] tracking-[-0.8px] pt-px" : 'pb-[2px]'}">${t}</span></div></div>`;
}).join('');

// trace header rows
const rows = [['Trace sequence\nnumber within line','4'],['Trace sequence\nnumber within file','0'],['Original field\nrecord','0'],
  ['Trace number within\nthe original field','0'],['Energy source point\nnumber','0'],['Ensemble number','223'],['Trace number within\nthe ensemble','0'],
  ['Trace\nidentification type','1'],['Trace number of\nsummed vertically','0'],['','']];
document.getElementById('grid').innerHTML =
  `<div class="flex h-[32px] border-b-2 border-black leading-[32px] shrink-0"><div class="w-[34px] border-t border-l border-white border-r border-r-[#aaa]"></div>
   <div class="w-[202px] border-t border-l border-white text-center leading-[30px]">道头</div><div class="flex-1 border-t border-white border-r border-r-black shadow-[inset_-1px_0_0_#777] text-right pr-[38px] font-['Liberation_Mono'] text-[18px] tracking-[-0.8px]">Trace 3</div>
   <div class="w-[147px] border-t border-l border-white pl-[39px] font-['Liberation_Mono'] text-[18px] tracking-[-0.8px]">Trace 4</div></div>` +
  rows.map(([a, b], i) => `<div class="flex h-[45px]">
    <div class="w-[34px] border-b border-black flex items-center pl-[5px] pt-[2px] font-['Liberation_Serif'] ${i === 5 ? 'font-bold border-l-2 border-t-2 border-b-0 bg-[repeating-conic-gradient(#fff_0_25%,#e5e5e5_0_50%)] bg-[length:2px_2px]' : 'shadow-[inset_1px_1px_0_#fff,inset_-1px_0_0_#000,inset_-2px_0_0_#777,inset_0_-1px_0_#777]'}">${i < 9 ? i + 1 : ''}</div>
    <div class="w-[300px] bg-[#ffffdc] border-l border-l-[#777] border-b border-b-[#999] flex items-center pl-[3px] pt-[3px] font-['Liberation_Mono'] text-[18px] tracking-[-0.8px] leading-[20px] whitespace-pre">${a}</div>
    <div class="flex-1 bg-white border-b border-r border-[#999]"></div>
    <div class="w-[147px] bg-white border-b border-[#999] flex items-center pl-[3px] font-['Liberation_Serif']">${b}</div></div>`).join('');

// field value plot
const gx = n => 785.5 + 70 * (n - 1), gy = v => Math.round(602 - (v - 220) * 46.667) + .5;
let p = '<rect x="785.5" y="252.5" width="420" height="420" fill="none" stroke="#000"/>';
for (let n = 1; n <= 7; n++) p += `<path d="M${gx(n)} 252V675" stroke="#000"/><text x="${gx(n) + 2}" y="687" text-anchor="middle" font-size="18" font-weight="bold" font-style="italic" font-family="Liberation Serif">${n}</text>`;
for (const v of [220, 222, 224, 226]) p += `<path d="M783 ${gy(v)}H1205" stroke="#000"/><text x="780" y="${gy(v) + 6.5}" text-anchor="end" font-size="20" font-weight="400" font-family="Liberation Serif">${v}</text>`;
p += `<path d="M785.5 602.5L1205.5 322.5" stroke="#ff0" stroke-width="1"/>
<text x="912" y="763" font-size="16.670" font-weight="bold" font-style="italic" font-family="Liberation Mono">Trace Number</text>
<text transform="translate(685 494) rotate(-90)" font-size="16.670" font-style="italic" font-family="Liberation Mono">Field Value</text>`;
document.getElementById('plot').innerHTML = p;

// taskbar: [cell width, state, icon svg]
const full = (id, w, h) => `<svg style="width:${w}px;height:${h}px"><use href="#${id}"/></svg>`;
const tasks = [
  [72,0,'<svg class="w-6 h-6" viewBox="0 0 24 24"><path d="M0 3.500l10-1.500v9.500H0zM11 1.800L24 0v11.500H11zM0 12.500h10V22L0 20.500zM11 12.500h13V24l-13-1.800z"/></svg>'],
  [79,0,'<svg class="w-[34px] h-[28px]" viewBox="0 0 34 28"><path d="M1 1h13l3 4H1z" fill="#dfa100"/><rect x="1" y="4" width="32" height="22" rx="1.500" fill="#ffd152"/><path d="M7 28V17q0-3 3-3h14q3 0 3 3v11h-6v-7h-8v7z" fill="#3d97e0"/></svg>'],
  [73,0,'<svg class="w-[26px] h-[26px]" viewBox="0 0 26 26"><path d="M8 25l1-9q-3-3-2-8V1l5 3h6l5-3v8q0 4-2 6l3 10z" fill="#1c3358"/><path d="M9 23q-8 2-7-3 2-3 0-5" fill="none" stroke="#1c3358" stroke-width="2"/><circle cx="12.500" cy="9" r="1" fill="#fff"/><circle cx="18" cy="9" r="1" fill="#fff"/></svg>'],
  [76,0,'<svg class="w-9 h-9" viewBox="0 0 36 36"><path d="M0 18A18 18 0 0136 16c0 7-7 9-12 7-3-1-1-3-1-6 0-4-4-7-9-7C7 10 1 14 0 18z" fill="url(#gEdge)"/><path d="M0 18c0-5 6-8 12-8 5 0 8 3 9 6-4-2-8 1-8 6 0 6 8 10 20 5A18 18 0 010 18z" fill="#0f66b8"/><path d="M13 22c0 7 10 9 20 5a18 18 0 01-13 9C11 35 8 27 13 22z" fill="#0c4f98"/></svg>'],
  [75,0,'<svg class="w-9 h-9" viewBox="0 0 36 36"><circle cx="18" cy="18" r="18" fill="#fbc116"/><path d="M18 18L2.400 9A18 18 0 0133.600 9z" fill="#ea4335"/><path d="M2.400 9A18 18 0 0018 36l8-13.500H10z" fill="#34a853"/><path d="M18 9h15.600A18 18 0 002.400 9l7.800 13.500z" fill="#ea4335"/><circle cx="18" cy="18" r="9" fill="#fff"/><circle cx="18" cy="18" r="7" fill="#2f7de1"/></svg>'],
  [75,0,'<svg class="w-[34px] h-[34px]" viewBox="0 0 34 34"><circle cx="17" cy="17" r="17" fill="url(#gSteam)"/><path d="M1 19l10 4 11-9" stroke="#fff" stroke-width="4.500" fill="none"/><circle cx="22" cy="12.500" r="6.500" fill="#fff"/><circle cx="22" cy="12.500" r="4.500" fill="#0b2a5b"/><circle cx="22" cy="12.500" r="3" fill="#fff"/><circle cx="11" cy="23" r="4.500" fill="#fff"/></svg>'],
  [75,0,'<svg class="w-9 h-[30px]" viewBox="0 0 36 30"><path d="M13 1a12 11 0 00-8 19l-1 4 5-2a12 11 0 104-21z" fill="#1fd268"/><circle cx="9" cy="8.500" r="1.600" fill="#0a7a38"/><circle cx="18" cy="8.500" r="1.600" fill="#0a7a38"/><ellipse cx="25.500" cy="20" rx="10" ry="8.500" fill="#e9e9e9"/><path d="M29 27l4 2-1-5z" fill="#e9e9e9"/><circle cx="22" cy="18" r="1.200" fill="#777"/><circle cx="29" cy="18" r="1.200" fill="#777"/></svg>'],
  [75,1,'<svg class="w-9 h-[32px]" viewBox="0 0 36 32"><ellipse cx="18" cy="16" rx="17" ry="15" fill="#165394"/><path d="M6 5.500h24M3 9h30M4 24h28M9 28h18" stroke="#9bbfe0"/><rect y="11" width="36" height="10" fill="#e6f0f8"/><text x="18" y="19.500" text-anchor="middle" font-size="9.500" font-weight="bold" font-family="Liberation Sans">GeoEast</text></svg>'],
  [75,1,'<svg class="w-[34px] h-[34px]" viewBox="0 0 34 34"><path d="M4 4l26-2 3 26-26 5z" fill="#d8d4cf"/><rect x="2" y="1" width="30" height="30" rx="5" fill="#fff"/><text x="17" y="25" text-anchor="middle" font-size="25" font-weight="bold" fill="#333" font-family="Liberation Serif">T</text></svg>'],
  [75,1,full('wells',36,36)],[75,1,full('win',35,30)],[75,1,full('basemap',36,34)],[76,1,full('win',35,30)],[74,2,full('win',35,30)]
];
document.getElementById('tasks').innerHTML = tasks.map(([w, st, svg]) =>
  `<div class="h-[59px] pb-[2px] flex items-center justify-center relative ${st === 2 ? 'bg-[#f7f3e8]' : ''}" style="width:${w}px">${svg}${st ? `<i class="absolute bottom-0 h-[3px] bg-[#e81123] ${st === 2 ? 'w-full' : 'w-[61px]'}"></i>` : ''}</div>`).join('');
</script>
</body>
</html>
